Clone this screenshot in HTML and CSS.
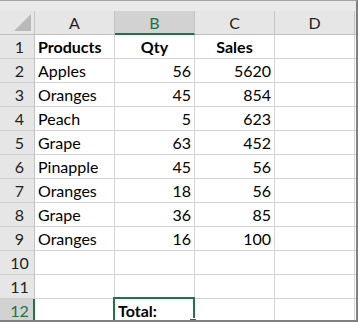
FILE: index.html
```html
<!DOCTYPE html>
<html lang="en">
<head>
    <meta charset="UTF-8">
    <meta name="viewport" content="width=device-width, initial-scale=1.0">
    <title>Sheet1</title>
    <link rel="stylesheet" href="styles.css">
</head>
<body>

    <div class="sheet">
        <div class="top-strip"></div>

        <div class="grid">
            <!-- header kolom -->
            <div class="corner">
                <svg width="17" height="17" viewBox="0 0 17 17"><polygon points="17,0 17,17 0,17" fill="#b9b9b9"/></svg>
            </div>
            <div class="col-head">A</div>
            <div class="col-head selected">B</div>
            <div class="col-head">C</div>
            <div class="col-head">D</div>
            <div class="col-head edge"></div>

            <div class="row-head">1</div>
            <div class="cell bold">Products</div>
            <div class="cell bold center">Qty</div>
            <div class="cell bold center">Sales</div>
            <div class="cell"></div>
            <div class="cell edge"></div>

            <div class="row-head">2</div>
            <div class="cell">Apples</div>
            <div class="cell num">56</div>
            <div class="cell num">5620</div>
            <div class="cell"></div>
            <div class="cell edge"></div>

            <div class="row-head">3</div>
            <div class="cell">Oranges</div>
            <div class="cell num">45</div>
            <div class="cell num">854</div>
            <div class="cell"></div>
            <div class="cell edge"></div>

            <div class="row-head">4</div>
            <div class="cell">Peach</div>
            <div class="cell num">5</div>
            <div class="cell num">623</div>
            <div class="cell"></div>
            <div class="cell edge"></div>

            <div class="row-head">5</div>
            <div class="cell">Grape</div>
            <div class="cell num">63</div>
            <div class="cell num">452</div>
            <div class="cell"></div>
            <div class="cell edge"></div>

            <div class="row-head">6</div>
            <div class="cell">Pinapple</div>
            <div class="cell num">45</div>
            <div class="cell num">56</div>
            <div class="cell"></div>
            <div class="cell edge"></div>

            <div class="row-head">7</div>
            <div class="cell">Oranges</div>
            <div class="cell num">18</div>
            <div class="cell num">56</div>
            <div class="cell"></div>
            <div class="cell edge"></div>

            <div class="row-head">8</div>
            <div class="cell">Grape</div>
            <div class="cell num">36</div>
            <div class="cell num">85</div>
            <div class="cell"></div>
            <div class="cell edge"></div>

            <div class="row-head">9</div>
            <div class="cell">Oranges</div>
            <div class="cell num">16</div>
            <div class="cell num">100</div>
            <div class="cell"></div>
            <div class="cell edge"></div>

            <div class="row-head">10</div>
            <div class="cell"></div>
            <div class="cell"></div>
            <div class="cell"></div>
            <div class="cell"></div>
            <div class="cell edge"></div>

            <div class="row-head">11</div>
            <div class="cell"></div>
            <div class="cell"></div>
            <div class="cell"></div>
            <div class="cell"></div>
            <div class="cell edge"></div>

            <div class="row-head selected">12</div>
            <div class="cell"></div>
            <div class="cell bold active">Total:</div>
            <div class="cell"></div>
            <div class="cell"></div>
            <div class="cell edge"></div>
        </div>
    </div>

</body>
</html>
```

FILE: styles.css
```css
/* Reset dasar */
* {
    margin: 0;
    padding: 0;
    box-sizing: border-box;
}

body {
    font-family: 'Lato', 'Liberation Sans', sans-serif;
    font-size: 16px;
    color: #000;
    background: #fff;
}

/* Bingkai lembar kerja */
.sheet {
    width: 358px;
    height: 322px;
    overflow: hidden;
    border-top: 1px solid #a3a3a3;
    border-right: 2px solid #808080;
    border-bottom: 2px solid #808080;
}

.top-strip {
    height: 10px;
    background: #e9e9e9;
}

.grid {
    display: grid;
    grid-template-columns: 35px repeat(4, 80px) 1fr;
    grid-auto-rows: 24px;
    line-height: 23px;
}

/* Header kolom & baris */
.corner,
.col-head,
.row-head {
    background: #e6e6e6;
    color: #1f1f1f;
    border-right: 1px solid #c4c4c4;
    border-bottom: 1px solid #bdbdbd;
}

.corner {
    display: flex;
    justify-content: flex-end;
    align-items: flex-end;
    padding: 0 3px 3px 0;
}

.corner svg {
    display: block;
}

.col-head {
    text-align: center;
}

.row-head {
    text-align: center;
    padding-left: 5px;
    border-bottom-color: #cfcfcf;
}

.col-head.selected {
    background: #d2d2d2;
    color: #217346;
    border-bottom: 2px solid #217346;
}

.row-head.selected {
    background: #d2d2d2;
    color: #217346;
    border-right-color: #217346;
    box-shadow: inset -1px 0 0 #217346;
}

.edge {
    border-right: none;
}

/* Sel data */
.cell {
    border-right: 1px solid #d4d4d4;
    border-bottom: 1px solid #d4d4d4;
    padding: 0 3px;
    white-space: nowrap;
}

.cell.edge {
    border-right: none;
}

.bold {
    font-weight: 700;
}

.center {
    text-align: center;
}

.num {
    text-align: right;
}

/* Sel aktif B12 */
.active {
    position: relative;
}

.active::after {
    content: '';
    position: absolute;
    top: -2px;
    left: -2px;
    right: -1px;
    bottom: -1px;
    border: 2px solid #217346;
}

.active::before {
    content: '';
    position: absolute;
    right: -3px;
    bottom: -4px;
    width: 6px;
    height: 6px;
    background: #217346;
    border: 1px solid #fff;
    z-index: 1;
}
```
